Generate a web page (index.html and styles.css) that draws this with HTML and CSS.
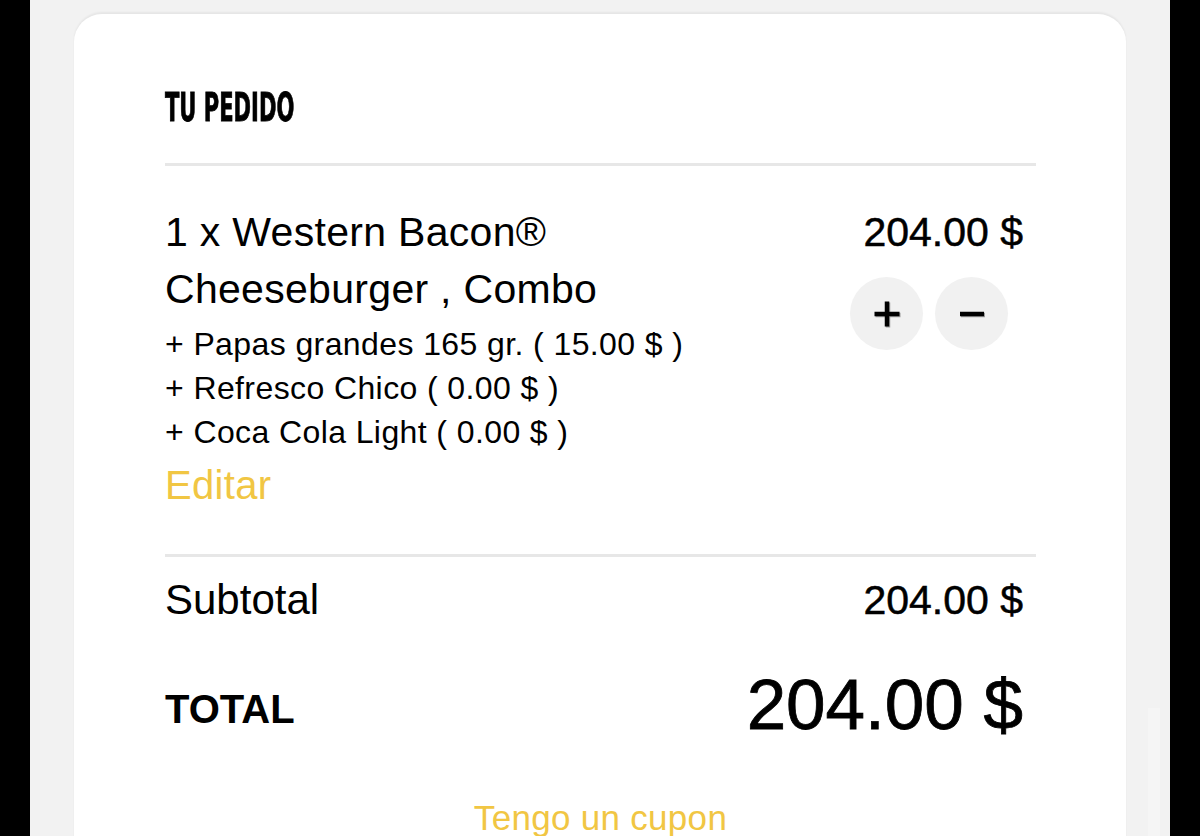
FILE: index.html
```html
<html>
<head>
	<title>Tu pedido</title>
<link rel="stylesheet" href="styles.css">
</head>
<body>
<div class="screen">
	<div class="card">
		<h1 class="heading"><span>TU PEDIDO</span></h1>
		<hr class="rule">

		<div class="item">
			<div class="item-info">
				<div class="item-name">1 x Western Bacon®<br>Cheeseburger , Combo</div>
				<div class="addons">
					<div>+ Papas grandes 165 gr. ( 15.00 $ )</div>
					<div>+ Refresco Chico ( 0.00 $ )</div>
					<div>+ Coca Cola Light ( 0.00 $ )</div>
				</div>
				<a class="edit" href="#">Editar</a>
			</div>
			<div class="item-side">
				<div class="price">204.00 $</div>
				<div class="qty">
					<button class="qty-btn" type="button">
						<svg viewBox="0 0 28 28" width="28" height="28"><path d="M14 1.5v25M1.5 14h25"/></svg>
					</button>
					<button class="qty-btn" type="button">
						<svg viewBox="0 0 28 28" width="28" height="28"><path d="M2 14h24"/></svg>
					</button>
				</div>
			</div>
		</div>

		<hr class="rule">

		<div class="row subtotal">
			<span>Subtotal</span>
			<span class="price">204.00 $</span>
		</div>
		<div class="row total">
			<span class="total-label">TOTAL</span>
			<span class="total-amount">204.00 $</span>
		</div>

		<div class="coupon"><a href="#">Tengo un cupon</a></div>
	</div>
	<div class="scroll-hint"></div>
</div>
</body>
</html>
```

FILE: styles.css
```css
BODY {margin:0; background-color:#000000; color:#000000; font-family: "Liberation Sans", Arial, Helvetica, sans-serif;}
A:link, A:visited {text-decoration: none; color: #f1c643;}

.screen {position:relative; margin:0 30px; height:836px; padding-top:14px; box-sizing:border-box; background-color:#f2f2f2; overflow:hidden;}
.card {margin:0 44px; min-height:900px; padding:74px 90px 0 91px; background-color:#ffffff; border-radius:28px; box-shadow:0 -2px 2px rgba(0,0,0,0.05);}

.heading {margin:0; height:40px; font-family: "Liberation Sans Narrow", "DejaVu Sans Condensed", sans-serif; font-weight:bold; font-size:39px; line-height:40px; white-space:nowrap;}
.heading span {display:inline-block; transform:scaleX(0.6); transform-origin:left center; -webkit-text-stroke:0.8px #000000;}

.rule {margin:0; height:3px; border:0; background-color:#e7e7e7;}
.heading + .rule {margin-top:35px;}

.item {display:flex; justify-content:space-between; padding:38px 13px 44px 0;}
.item-name {font-size:41px; line-height:57px; letter-spacing:0.3px;}
.addons {margin-top:4px; font-size:32px; line-height:44px; letter-spacing:0.4px;}
.edit {display:block; margin-top:6px; font-size:40px; line-height:50px; letter-spacing:0.3px;}

.item-side {display:flex; flex-direction:column; align-items:flex-end;}
.price {font-size:41px; line-height:57px; -webkit-text-stroke:0.5px #000000;}
.qty {display:flex; gap:12px; margin-top:16px; margin-right:15px;}
.qty-btn {width:73px; height:73px; padding:0; border:0; border-radius:50%; background-color:#f1f1f1; display:flex; align-items:center; justify-content:center;}
.qty-btn svg {fill:none; stroke:#000000; stroke-width:4.5; filter:drop-shadow(1.5px 1.5px 0.5px rgba(0,0,0,0.35));}

.row {display:flex; justify-content:space-between; align-items:center; padding-right:13px;}
.subtotal {margin-top:18px; font-size:42px; line-height:50px;}
.subtotal .price {font-size:41px; line-height:50px;}
.total {margin-top:40px; height:80px;}
.total-label {padding-top:9px; font-size:40px; font-weight:bold;}
.total-amount {font-size:71px; line-height:80px; -webkit-text-stroke:0.8px #000000;}

.coupon {margin-top:48px; text-align:center; font-size:35px; line-height:50px; letter-spacing:0.3px;}

.scroll-hint {position:absolute; left:1118px; top:708px; width:12px; height:140px; background-color:#f5f5f5;}
```
